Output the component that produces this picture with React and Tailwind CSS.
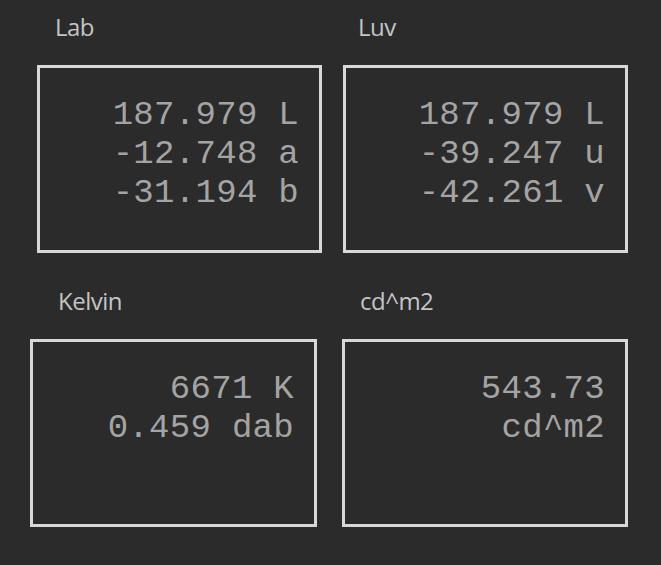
const cells = [
  {
    label: 'Lab',
    labelClass: 'ml-[55px]',
    boxClass: 'ml-[37px] w-[285px]',
    lines: ['187.979 L', '-12.748 a', '-31.194 b'],
  },
  {
    label: 'Luv',
    labelClass: 'ml-[28px]',
    boxClass: 'ml-[13px] w-[285px]',
    lines: ['187.979 L', '-39.247 u', '-42.261 v'],
  },
  {
    label: 'Kelvin',
    labelClass: 'ml-[58px]',
    boxClass: 'ml-[30px] w-[287px]',
    lines: ['6671 K', '0.459 dab'],
  },
  {
    label: 'cd^m2',
    labelClass: 'ml-[30px]',
    boxClass: 'ml-[12px] w-[286px]',
    lines: ['543.73', 'cd^m2'],
  },
];

function Readout({ label, labelClass, boxClass, lines }) {
  return (
    <div className="flex flex-col">
      <div
        className={`${labelClass} h-[26px] text-[24px] leading-[26px] tracking-[-0.5px] text-[#c4c4c4]`}
        style={{ fontFamily: '"Open Sans", "Noto Sans", sans-serif' }}
      >
        {label}
      </div>
      <div
        className={`${boxClass} mt-[25px] h-[188px] border-[3px] border-[#d8d8d8] pt-[28px] pr-[20px] text-right text-[34px] leading-[39px] tracking-[0.3px] text-[#a4a4a4] whitespace-pre`}
        style={{ fontFamily: '"Liberation Mono", monospace' }}
      >
        {lines.map((l) => (
          <div key={l}>{l}</div>
        ))}
      </div>
    </div>
  );
}

export default function App() {
  return (
    <div className="w-[661px] h-[565px] bg-[#2b2b2b] pt-[14px]">
      <div className="grid grid-cols-[330px_331px] gap-y-[35px]">
        {cells.map((c) => (
          <Readout key={c.label} {...c} />
        ))}
      </div>
    </div>
  );
}
